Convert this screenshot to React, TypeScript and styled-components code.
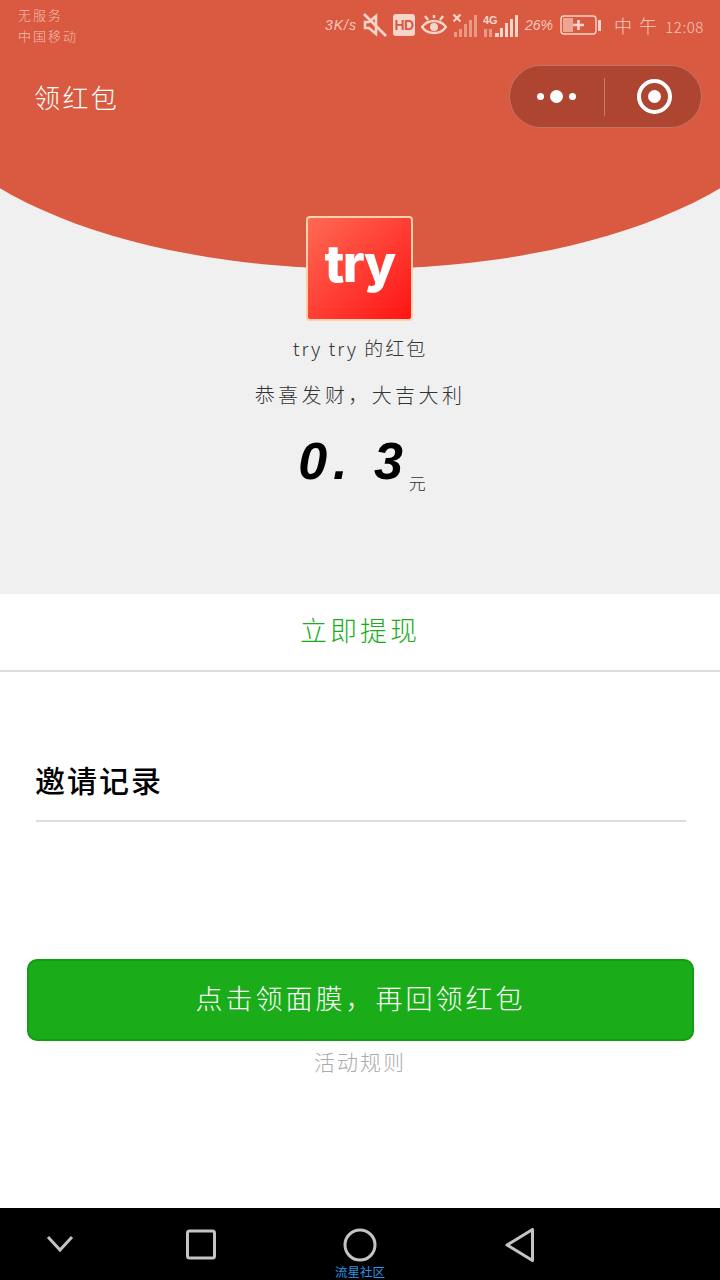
import React from "react";
import styled, { createGlobalStyle } from "styled-components";

const Global = createGlobalStyle`
  html, body { margin: 0; padding: 0; background: #fff; }
  body { font-family: "Noto Sans CJK SC", "Noto Sans", sans-serif; font-weight: 300; }
  #root { width: 720px; height: 1280px; overflow: hidden; }
`;

const Page = styled.div`
  width: 720px;
  height: 1280px;
  display: flex;
  flex-direction: column;
  background: #fff;
  overflow: hidden;
`;

const Hero = styled.section`
  position: relative;
  height: 594px;
  flex: none;
  background: #f0f0f0;
  overflow: hidden;
  display: flex;
  flex-direction: column;
  &::before {
    content: "";
    position: absolute;
    left: -90px;
    top: -135px;
    width: 900px;
    height: 404px;
    border-radius: 50%;
    background: #d95a40;
  }
  & > * { position: relative; }
`;

const StatusBar = styled.div`
  height: 64px;
  padding: 4px 16px 0 18px;
  box-sizing: border-box;
  display: flex;
  justify-content: space-between;
  align-items: flex-start;
  color: #f5c9bd;
`;

const Carrier = styled.div`
  font-size: 13px;
  line-height: 21px;
  letter-spacing: 2px;
  color: #f3bfb1;
`;

const StatusRight = styled.div`
  display: flex;
  align-items: center;
  gap: 6px;
  height: 42px;
`;

const Speed = styled.span`
  font-family: "Liberation Sans", sans-serif;
  font-size: 14px;
  font-style: italic;
  letter-spacing: 1px;
`;

const HdBadge = styled.span`
  width: 22px;
  height: 22px;
  border-radius: 3px;
  background: #f8d5cb;
  color: #d95a40;
  font-family: "Liberation Sans", sans-serif;
  font-weight: 700;
  font-size: 14px;
  letter-spacing: -0.5px;
  display: flex;
  align-items: center;
  justify-content: center;
`;

const Percent = styled.span`
  width: 29px;
  font-family: "Liberation Sans", sans-serif;
  font-size: 14px;
  font-style: italic;
  letter-spacing: 0;
  white-space: nowrap;
`;

const Clock = styled.span`
  margin-left: 7px;
  width: 90px;
  display: flex;
  align-items: baseline;
  justify-content: space-between;
  font-size: 18px;
  white-space: nowrap;
  & > b { font-weight: 300; letter-spacing: 7px; }
  & > i { font-style: normal; font-size: 15px; letter-spacing: 0.6px; }
`;

const NavRow = styled.div`
  display: flex;
  justify-content: space-between;
  align-items: flex-start;
  padding: 1px 18px 0 34px;
  height: 64px;
  box-sizing: border-box;
`;

const Title = styled.h1`
  margin: 0;
  font-size: 26px;
  font-weight: 300;
  line-height: 64px;
  letter-spacing: 2.4px;
  color: #fff;
`;

const Capsule = styled.div`
  width: 193px;
  height: 63px;
  box-sizing: border-box;
  border-radius: 32px;
  border: 1px solid rgba(255, 255, 255, 0.25);
  background: #ad4530;
  display: flex;
  align-items: center;
`;

const CapsulePart = styled.div<{ $inset?: number }>`
  flex: 1;
  height: 38px;
  display: flex;
  align-items: center;
  justify-content: center;
  gap: 6px;
  padding-left: ${(p) => p.$inset ?? 0}px;
  & + & { border-left: 1px solid rgba(255, 255, 255, 0.3); }
`;

const Dot = styled.span<{ $size: number }>`
  width: ${(p) => p.$size}px;
  height: ${(p) => p.$size}px;
  border-radius: 50%;
  background: #fff;
`;

const Target = styled.span`
  width: 35px;
  height: 35px;
  box-sizing: border-box;
  border: 4px solid #fff;
  border-radius: 50%;
  display: flex;
  align-items: center;
  justify-content: center;
  &::after {
    content: "";
    width: 13px;
    height: 13px;
    border-radius: 50%;
    background: #fff;
  }
`;

const Body = styled.div`
  display: flex;
  flex-direction: column;
  align-items: center;
  padding-top: 88px;
`;

const Logo = styled.div`
  width: 107px;
  height: 105px;
  margin-left: -1px;
  box-sizing: border-box;
  border: 2px solid #fbd3ab;
  border-radius: 4px;
  background: linear-gradient(135deg, #ff6a55 0%, #ff1414 100%);
  color: #fff;
  font-family: "Inter", sans-serif;
  font-weight: 800;
  font-size: 52px;
  letter-spacing: -1.5px;
  line-height: 92px;
  text-align: center;
`;

const Sender = styled.div`
  margin-top: 12px;
  font-size: 19px;
  line-height: 30px;
  letter-spacing: 2px;
  color: #333;
`;

const Wish = styled.div`
  margin-top: 17px;
  font-size: 20px;
  line-height: 30px;
  letter-spacing: 3.4px;
  color: #333;
`;

const Amount = styled.div`
  margin-top: 21px;
  margin-left: 4px;
  display: flex;
  align-items: flex-end;
  color: #000;
`;

const AmountValue = styled.span`
  font-family: "Liberation Sans", sans-serif;
  font-style: italic;
  font-weight: 700;
  font-size: 52px;
  line-height: 60px;
  letter-spacing: 6px;
  white-space: pre;
`;

const Unit = styled.span`
  font-size: 17px;
  line-height: 26px;
  margin-bottom: -5px;
  color: #333;
`;

const Withdraw = styled.div`
  height: 78px;
  box-sizing: border-box;
  padding-bottom: 5px;
  border-bottom: 2px solid #ddd;
  display: flex;
  align-items: center;
  justify-content: center;
  font-size: 27px;
  letter-spacing: 3px;
  color: #1aad19;
`;

const Records = styled.div`
  margin: 88px 34px 0 36px;
  height: 62px;
  box-sizing: border-box;
  border-bottom: 2px solid #ddd;
  font-size: 30px;
  font-weight: 500;
  line-height: 38px;
  letter-spacing: 2px;
  color: #000;
  text-indent: -1px;
`;

const ClaimButton = styled.button`
  margin: 137px 26px 0 27px;
  height: 82px;
  box-sizing: border-box;
  padding-bottom: 6px;
  border: 2px solid #159c14;
  border-radius: 10px;
  background: #1aad19;
  color: #fff;
  font-family: inherit;
  font-weight: 300;
  font-size: 27px;
  letter-spacing: 3px;
`;

const Rules = styled.div`
  margin-top: 4px;
  text-align: center;
  font-size: 21px;
  line-height: 32px;
  letter-spacing: 2px;
  color: #aaa;
`;

const Spacer = styled.div`
  flex: 1;
`;

const SoftKeys = styled.nav`
  height: 72px;
  flex: none;
  background: #000;
  display: flex;
  align-items: flex-start;
  padding: 20px 0 0 46px;
  box-sizing: border-box;
  color: #c4c4c4;
  overflow: hidden;
`;

const KeyIcon = styled.svg<{ $gap: number }>`
  flex: none;
  margin-left: ${(p) => p.$gap}px;
  display: block;
`;

const HomeKey = styled.div`
  width: 60px;
  margin-left: 114px;
  display: flex;
  flex-direction: column;
  align-items: center;
  flex: none;
`;

const Community = styled.span`
  font-size: 12.5px;
  font-weight: 400;
  line-height: 14px;
  margin-top: 3px;
  white-space: nowrap;
  color: #2a93e6;
`;

export default function App() {
  return (
    <Page>
      <Global />
      <Hero>
        <StatusBar>
          <Carrier>
            <div>无服务</div>
            <div>中国移动</div>
          </Carrier>
          <StatusRight>
            <Speed>3K/s</Speed>
            <svg width="24" height="24" viewBox="0 0 24 24" fill="none" stroke="#f8d5cb" strokeWidth="2.6">
              <path d="M2 9h4l7-6v18l-7-6H2z" />
              <path d="M1 1l22 22" />
            </svg>
            <HdBadge>HD</HdBadge>
            <svg width="26" height="22" viewBox="0 0 26 22" fill="none" stroke="#f8d5cb" strokeWidth="2.4">
              <path d="M1 13c6-8 18-8 24 0-6 8-18 8-24 0z" />
              <circle cx="13" cy="13" r="4" fill="#f8d5cb" stroke="none" />
              <path d="M4 2l3 4M22 2l-3 4M13 1v3" />
            </svg>
            <svg width="24" height="23" viewBox="0 0 24 23" fill="#e99a87">
              <path d="M0.5 0.5l7 7M7.5 0.5l-7 7" stroke="#f8d5cb" strokeWidth="2.2" />
              <rect x="1" y="18" width="3" height="5" />
              <rect x="6" y="15" width="3" height="8" />
              <rect x="11" y="10" width="3" height="13" />
              <rect x="16" y="6" width="3" height="17" />
              <rect x="21" y="1" width="3" height="22" />
            </svg>
            <svg width="36" height="23" viewBox="0 0 36 23" fill="#f8d5cb">
              <text x="0" y="10" fontFamily="Liberation Sans" fontWeight="700" fontSize="11">4G</text>
              <rect x="1" y="15" width="3" height="8" fill="#e99a87" />
              <rect x="6" y="15" width="3" height="8" fill="#e99a87" />
              <rect x="12" y="19" width="4" height="4" />
              <rect x="17" y="14" width="3" height="9" />
              <rect x="22" y="9" width="3" height="14" />
              <rect x="27" y="5" width="3" height="18" />
              <rect x="32" y="1" width="3" height="22" />
            </svg>
            <Percent>26%</Percent>
            <svg width="41" height="20" viewBox="0 0 41 20" fill="none">
              <rect x="1" y="1" width="35" height="18" rx="3" stroke="#f8d5cb" strokeWidth="1.4" />
              <rect x="3" y="3" width="10" height="14" fill="#eea593" />
              <path d="M13 10h11M18.5 5v10" stroke="#f8d5cb" strokeWidth="2.6" />
              <rect x="38" y="5" width="3" height="11" fill="#f8d5cb" />
            </svg>
            <Clock>
              <b>中午</b>
              <i>12:08</i>
            </Clock>
          </StatusRight>
        </StatusBar>
        <NavRow>
          <Title>领红包</Title>
          <Capsule>
            <CapsulePart>
              <Dot $size={7} />
              <Dot $size={13} />
              <Dot $size={7} />
            </CapsulePart>
            <CapsulePart $inset={3}>
              <Target />
            </CapsulePart>
          </Capsule>
        </NavRow>
        <Body>
          <Logo>try</Logo>
          <Sender>try try 的红包</Sender>
          <Wish>恭喜发财，大吉大利</Wish>
          <Amount>
            <AmountValue>0. 3</AmountValue>
            <Unit>元</Unit>
          </Amount>
        </Body>
      </Hero>
      <Withdraw>立即提现</Withdraw>
      <Records>邀请记录</Records>
      <ClaimButton>点击领面膜，再回领红包</ClaimButton>
      <Rules>活动规则</Rules>
      <Spacer />
      <SoftKeys>
        <KeyIcon $gap={0} width="28" height="30" viewBox="0 0 28 30" fill="none" stroke="currentColor" strokeWidth="3">
          <path d="M2 9l12 13L26 9" />
        </KeyIcon>
        <KeyIcon $gap={112} width="30" height="32" viewBox="0 0 30 32" fill="none" stroke="currentColor" strokeWidth="3">
          <rect x="1.5" y="3" width="27" height="27" rx="2" />
        </KeyIcon>
        <HomeKey>
          <svg width="34" height="34" viewBox="0 0 34 34" fill="none" stroke="currentColor" strokeWidth="3">
            <circle cx="17" cy="17" r="15" />
          </svg>
          <Community>流星社区</Community>
        </HomeKey>
        <KeyIcon $gap={115} width="30" height="34" viewBox="0 0 30 34" fill="none" stroke="currentColor" strokeWidth="3" strokeLinejoin="round">
          <path d="M27.5 1.5v31L2 17z" />
        </KeyIcon>
      </SoftKeys>
    </Page>
  );
}
